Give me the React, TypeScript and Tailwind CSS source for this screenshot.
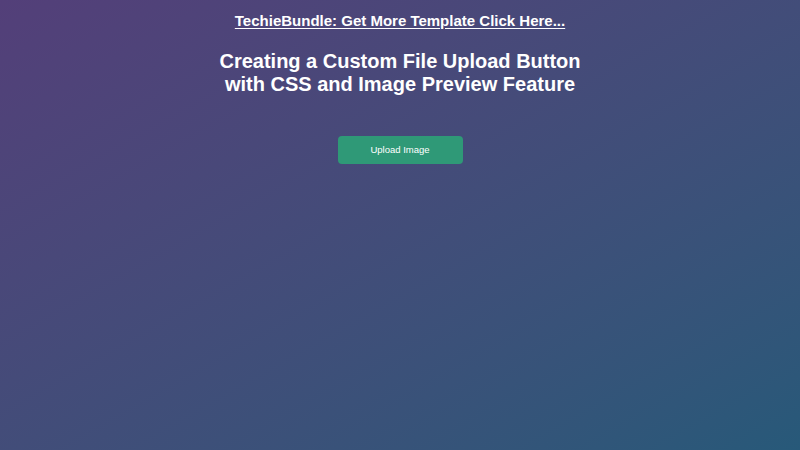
export default function App() {
  return (
    <div className="min-h-[450px] w-full bg-linear-to-br from-[#533f79] to-[#275979] font-['Liberation_Sans',Arial,sans-serif] text-white flex flex-col items-center">
      <a href="#" className="mt-[12px] text-[15px] leading-[18px] font-bold underline underline-offset-2">
        TechieBundle: Get More Template Click Here...
      </a>
      <h1 className="mt-[20px] text-[20px] leading-[23px] font-bold text-center">
        Creating a Custom File Upload Button
        <br />
        with CSS and Image Preview Feature
      </h1>
      <button className="mt-[40px] w-[125px] h-[28px] rounded-[4px] bg-[#2f9977] text-[9.5px] text-white">
        Upload Image
      </button>
    </div>
  );
}
